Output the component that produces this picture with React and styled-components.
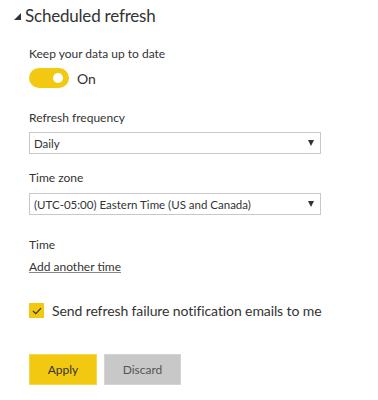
import React from 'react';
import styled, { createGlobalStyle } from 'styled-components';

const GlobalStyle = createGlobalStyle`
    body {
        margin: 0;
        background: #fff;
        font-family: "Lato", "Open Sans", sans-serif;
        color: #333;
    }
`;

const Panel = styled.div`
    width: 378px;
    height: 400px;
    box-sizing: border-box;
    padding: 2px 0 0 14px;
    background: #fff;
`;

const Header = styled.div`
    display: flex;
    align-items: center;
    gap: 4px;
    font-size: 17px;
    letter-spacing: -0.2px;
    color: #333;
    height: 26px;
`;

const Caret = styled.span`
    width: 0;
    height: 0;
    border-left: 7px solid transparent;
    border-bottom: 7px solid #333;
    margin-top: 3px;
`;

const Body = styled.div`
    padding: 18px 0 0 15px;
    width: 292px;
`;

const Label = styled.div`
    font-size: 12px;
    line-height: 16px;
    color: #333;
    margin-top: ${p => p.$top || 0}px;
`;

const ToggleRow = styled.div`
    display: flex;
    align-items: center;
    gap: 8px;
    margin-top: 6px;
    font-size: 14px;
`;

const Toggle = styled.div`
    width: 40px;
    height: 20px;
    border-radius: 10px;
    background: #f2c811;
    position: relative;
    flex-shrink: 0;

    &::after {
        content: '';
        position: absolute;
        right: 6px;
        top: 5px;
        width: 10px;
        height: 10px;
        border-radius: 50%;
        background: #fff;
    }
`;

const Select = styled.div`
    margin-top: ${p => p.$top || 0}px;
    height: 22px;
    box-sizing: border-box;
    border: 1px solid #c8c8c8;
    display: flex;
    align-items: center;
    justify-content: space-between;
    padding: 0 6px 0 4px;
    font-size: 11.5px;
    color: #333;
`;

const Arrow = styled.span`
    width: 0;
    height: 0;
    border-left: 3px solid transparent;
    border-right: 3px solid transparent;
    border-top: 6px solid #333;
`;

const Link = styled.a`
    display: inline-block;
    margin-top: 6px;
    font-size: 12px;
    color: #333;
    text-decoration: underline;
    text-decoration-color: #888;
`;

const CheckRow = styled.label`
    display: flex;
    align-items: center;
    gap: 8px;
    margin-top: 28px;
    font-size: 14px;
    letter-spacing: -0.1px;
    color: #333;
    white-space: nowrap;
`;

const Box = styled.span`
    width: 15px;
    height: 15px;
    flex-shrink: 0;
    background: #f2c811;
    display: flex;
    align-items: center;
    justify-content: center;
`;

const Buttons = styled.div`
    display: flex;
    gap: 7px;
    margin-top: 35px;
`;

const Button = styled.button`
    height: 31px;
    width: ${p => p.$w}px;
    border: 1px solid ${p => (p.$primary ? '#f5d54a' : '#d4d4d4')};
    background: ${p => (p.$primary ? '#f2c811' : '#c8c8c8')};
    color: ${p => (p.$primary ? '#333' : '#555')};
    font-family: inherit;
    font-size: 12px;
    padding: 0;
`;

export default function App() {
    return (
        <Panel>
            <GlobalStyle />
            <Header>
                <Caret />
                Scheduled refresh
            </Header>
            <Body>
                <Label>Keep your data up to date</Label>
                <ToggleRow>
                    <Toggle />
                    On
                </ToggleRow>
                <Label $top={22}>Refresh frequency</Label>
                <Select $top={6}>
                    Daily
                    <Arrow />
                </Select>
                <Label $top={16}>Time zone</Label>
                <Select $top={7}>
                    (UTC-05:00) Eastern Time (US and Canada)
                    <Arrow />
                </Select>
                <Label $top={22}>Time</Label>
                <Link>Add another time</Link>
                <CheckRow>
                    <Box>
                        <svg width="10" height="8" viewBox="0 0 10 8">
                            <path d="M1 4 L3.8 6.6 L9 1.2" fill="none" stroke="#333" strokeWidth="1.2" />
                        </svg>
                    </Box>
                    Send refresh failure notification emails to me
                </CheckRow>
                <Buttons>
                    <Button $primary $w={68}>Apply</Button>
                    <Button $w={77}>Discard</Button>
                </Buttons>
            </Body>
        </Panel>
    );
}
